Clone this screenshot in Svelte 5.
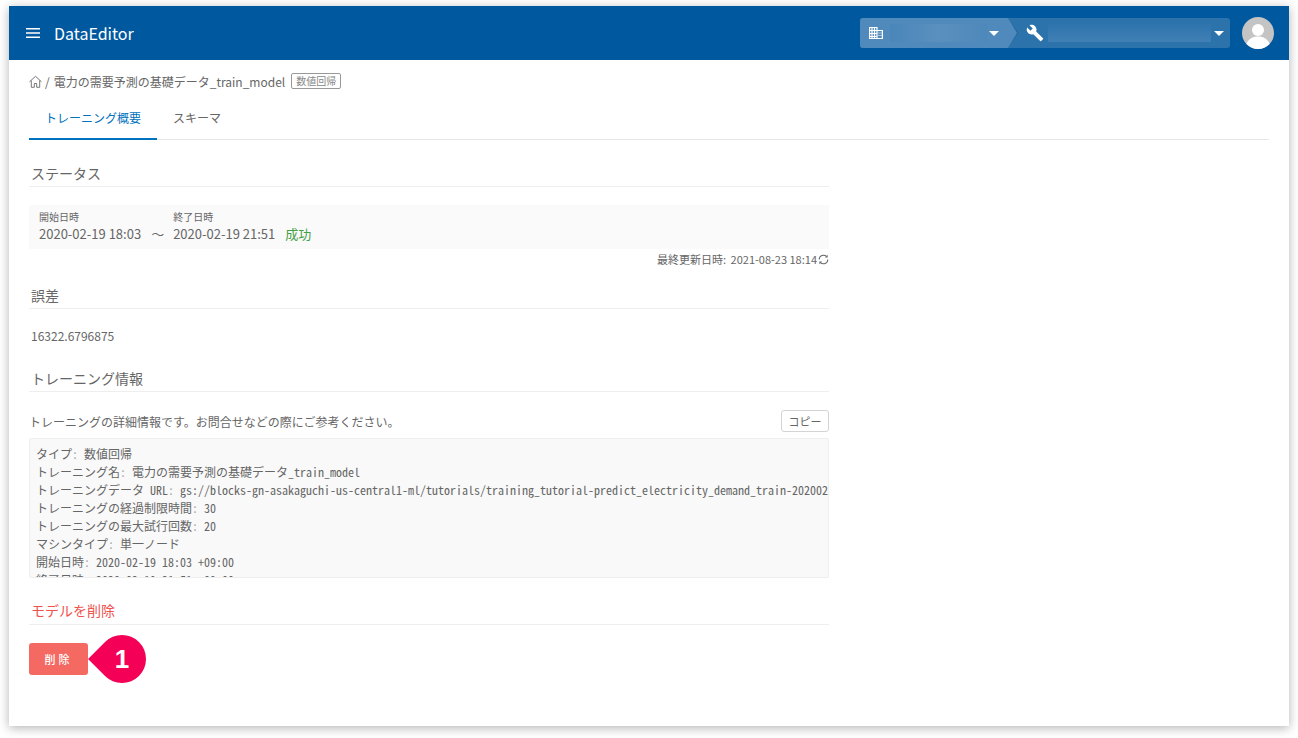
<script lang="ts">
  const codeLines = [
    ['タイプ', '数値回帰'],
    ['トレーニング名', '電力の需要予測の基礎データ_train_model'],
    ['トレーニングデータ URL', 'gs://blocks-gn-asakaguchi-us-central1-ml/tutorials/training_tutorial-predict_electricity_demand_train-20200219180300/model'],
    ['トレーニングの経過制限時間', '30'],
    ['トレーニングの最大試行回数', '20'],
    ['マシンタイプ', '単一ノード'],
    ['開始日時', '2020-02-19 18:03 +09:00'],
    ['終了日時', '2020-02-19 21:51 +09:00']
  ];
</script>

<div class="page">
  <div class="card">
    <header class="topbar">
      <div class="brand">
        <svg class="menu" width="16" height="16" viewBox="0 0 16 16" aria-hidden="true">
          <path d="M1 3h14v1.6H1zM1 7.200h14v1.600H1zM1 11.400h14V13H1z" fill="#fff" />
        </svg>
        <span class="app-name">DataEditor</span>
      </div>
      <div class="switcher">
        <div class="crumb crumb-org">
          <svg width="14" height="14" viewBox="0 0 14 14" aria-hidden="true">
            <path fill="none" stroke="#fff" stroke-width="1.200" d="M.6 1.500h7.400v11H.6zM8 4.500h5.400v8H8zM.6 4.500H8M.6 7.500H8M.6 10.500H8M3 1.500v11M5.500 1.500v11" />
            <path fill="#fff" d="M9.500 6.500h1v1h-1zM11.500 6.500h1v1h-1zM9.500 9h1v1h-1zM11.500 9h1v1h-1z" />
          </svg>
          <span class="mask"></span>
          <span class="caret"></span>
        </div>
        <div class="crumb crumb-project">
          <svg width="18" height="18" viewBox="0 0 24 24" aria-hidden="true">
            <path fill="#fff" d="M22.700 19l-9.100-9.100c.9-2.300.4-5-1.500-6.900-2-2-5-2.400-7.400-1.300L9 6 6 9 1.600 4.700C.4 7.100.9 10.100 2.900 12.100c1.900 1.900 4.600 2.400 6.900 1.500l9.100 9.100c.4.400 1 .4 1.400 0l2.300-2.300c.5-.4.500-1.100.1-1.400z" />
          </svg>
          <span class="mask mask-wide"></span>
          <span class="caret"></span>
        </div>
      </div>
      <div class="avatar">
        <svg width="32" height="32" viewBox="0 0 32 32" aria-hidden="true">
          <circle cx="16" cy="16" r="16" fill="#c4c4c4" />
          <circle cx="16" cy="13" r="6" fill="#fff" />
          <path d="M4.500 27c1.500-5 6-7.500 11.500-7.500S26 22 27.500 27A16 16 0 0 1 16 32 16 16 0 0 1 4.500 27z" fill="#fff" />
        </svg>
      </div>
    </header>

    <main class="content">
      <nav class="breadcrumb">
        <svg width="13" height="13" viewBox="0 0 13 13" aria-hidden="true">
          <path d="M.5 6.800 6.500 1.300l6 5.500M2.300 5.500v6.800h3V8.500h2.400v3.800h3V5.500" fill="none" stroke="#777" stroke-width="1" />
        </svg>
        <span class="sep">/</span>
        <span>電力の需要予測の基礎データ_train_model</span>
        <span class="tag">数値回帰</span>
      </nav>

      <div class="tabs">
        <div class="tab active">トレーニング概要</div>
        <div class="tab">スキーマ</div>
      </div>

      <div class="column">
        <section class="status">
          <h2>ステータス</h2>
          <div class="status-box">
            <div class="status-col">
              <span class="label">開始日時</span>
              <span class="value">2020-02-19 18:03</span>
            </div>
            <span class="tilde">〜</span>
            <div class="status-col">
              <span class="label">終了日時</span>
              <span class="value">2020-02-19 21:51</span>
            </div>
            <span class="success">成功</span>
          </div>
          <div class="updated">
            <span>最終更新日時: <span class="updated-at">2021-08-23 18:14</span></span>
            <svg width="11" height="11" viewBox="0 0 12 12" aria-hidden="true">
              <path d="M1.300 6a4.700 4.700 0 0 1 8-3.300M10.700 6a4.700 4.700 0 0 1-8 3.300" fill="none" stroke="#666" stroke-width="1.100" />
              <path d="M10.500 0.800v3h-3zM1.500 11.200v-3h3z" fill="#666" />
            </svg>
          </div>
        </section>

        <section class="error">
          <h2>誤差</h2>
          <p class="error-value">16322.6796875</p>
        </section>

        <section class="info">
          <h2>トレーニング情報</h2>
          <div class="info-head">
            <span>トレーニングの詳細情報です。お問合せなどの際にご参考ください。</span>
            <button type="button" class="copy">コピー</button>
          </div>
          <pre class="code">{#each codeLines as [key, val]}<span>{key}</span><span class="colon">: </span><span>{val}</span>{'\n'}{/each}</pre>
        </section>

        <section class="danger">
          <h2>モデルを削除</h2>
          <div class="danger-row">
            <button type="button" class="delete">削除</button>
            <div class="pin"><span>1</span></div>
          </div>
        </section>
      </div>
    </main>
  </div>
</div>

<style>
  :global(body) {
    margin: 0;
    background: #fff;
  }

  .page {
    height: 738px;
    box-sizing: border-box;
    padding: 6px 9px 12px;
    overflow: hidden;
  }

  .card {
    width: 1280px;
    height: 720px;
    background: #fff;
    box-shadow: 0 2px 10px rgba(0, 0, 0, 0.3);
    font-family: "Noto Sans CJK JP", "Noto Sans", sans-serif;
    color: #666;
    overflow: hidden;
  }

  .topbar {
    height: 54px;
    background: #00589f;
    display: flex;
    align-items: center;
    padding: 0 15px 0 16px;
    color: #fff;
  }

  .brand {
    display: flex;
    align-items: center;
    gap: 13px;
    flex: 1;
  }

  .app-name {
    font-size: 16px;
  }

  .switcher {
    display: flex;
    height: 30px;
    width: 370px;
    margin-right: 12px;
    border-radius: 3px;
    overflow: hidden;
    background: #2c72ab;
  }

  .crumb {
    position: relative;
    display: flex;
    align-items: center;
  }

  .crumb-org {
    width: 148px;
    padding-left: 9px;
    box-sizing: border-box;
    background: #5089bb;
    z-index: 1;
  }

  .crumb-org::before {
    content: "";
    position: absolute;
    right: -10px;
    top: 0;
    border-top: 15px solid transparent;
    border-bottom: 15px solid transparent;
    border-left: 10px solid #1c649f;
  }

  .crumb-org::after {
    content: "";
    position: absolute;
    right: -9px;
    top: 0;
    border-top: 15px solid transparent;
    border-bottom: 15px solid transparent;
    border-left: 9px solid #5089bb;
  }

  .crumb-project {
    flex: 1;
    padding-left: 18px;
  }

  .mask {
    width: 97px;
    height: 18px;
    margin-left: 7px;
    background: linear-gradient(90deg, #4a86b9, #5a90bf, #4e88ba);
  }

  .mask-wide {
    width: 163px;
    margin-left: 4px;
    background: linear-gradient(#2f74ad, #4080b5);
  }

  .caret {
    position: absolute;
    right: 7px;
    top: 13px;
    border-left: 5px solid transparent;
    border-right: 5px solid transparent;
    border-top: 5px solid #fff;
  }

  .crumb-org .caret {
    right: 9px;
  }

  .crumb-project .caret {
    right: 6px;
  }

  .avatar {
    width: 32px;
    height: 32px;
  }

  .content {
    padding: 13px 20px 0;
  }

  .breadcrumb {
    display: flex;
    align-items: center;
    font-size: 12px;
    height: 16px;
  }

  .sep {
    margin: 0 4px 0 3px;
  }

  .tag {
    margin-left: 6px;
    border: 1px solid #999;
    border-radius: 2px;
    font-size: 10px;
    line-height: 14px;
    padding: 0 4px;
    color: #888;
  }

  .tabs {
    display: flex;
    margin-top: 8px;
    border-bottom: 1px solid #e6e6e6;
    height: 42px;
  }

  .tab {
    padding: 0 16px;
    font-size: 12px;
    line-height: 42px;
    height: 42px;
    box-sizing: border-box;
  }

  .tab.active {
    color: #0071bc;
    border-bottom: 2px solid #0071bc;
    height: 43px;
  }

  .column {
    width: 800px;
  }

  h2 {
    margin: 0;
    font-size: 14px;
    font-weight: 400;
    line-height: 20px;
    height: 23px;
    padding-left: 2px;
    border-bottom: 1px solid #eee;
  }

  .status {
    padding-top: 23px;
  }

  .status-box {
    margin-top: 18px;
    height: 44px;
    background: #fafafa;
    display: flex;
    align-items: center;
    padding-left: 10px;
  }

  .status-col {
    display: flex;
    flex-direction: column;
    margin-top: -1px;
  }

  .label {
    font-size: 10px;
    line-height: 14px;
  }

  .value {
    font-size: 13px;
    line-height: 20px;
  }

  .tilde {
    font-size: 13px;
    margin: 12px 9px 0 10px;
  }

  .success {
    font-size: 13px;
    color: #43a047;
    margin: 12px 0 0 10px;
  }

  .updated {
    display: flex;
    justify-content: flex-end;
    align-items: center;
    gap: 1px;
    height: 20px;
    font-size: 11px;
  }

  .updated-at {
    margin-left: 2px;
  }

  .error {
    padding-top: 16px;
  }

  .error-value {
    margin: 19px 0 0 2px;
    font-size: 12px;
    line-height: 16px;
  }

  .info {
    padding-top: 24px;
  }

  .info-head {
    display: flex;
    justify-content: space-between;
    align-items: center;
    margin-top: 18px;
    height: 23px;
    font-size: 12px;
  }

  .copy {
    width: 48px;
    height: 22px;
    margin-bottom: 1px;
    padding: 0;
    border: 1px solid #d4d4d4;
    border-radius: 3px;
    background: #fff;
    font: inherit;
    font-size: 11px;
    color: #666;
  }

  .code {
    margin: 5px 0 0;
    height: 123px;
    padding: 6px 0 9px 6px;
    border: 1px solid #eee;
    background: #f9f9f9;
    overflow: hidden;
    font-family: "Noto Sans Mono CJK JP", "Liberation Mono", monospace;
    font-size: 12px;
    line-height: 18px;
    white-space: pre;
    border-radius: 2px;
  }

  .colon {
    color: #aaa;
  }

  .danger {
    padding-top: 22px;
  }

  .danger h2 {
    color: #ef5350;
    height: 24px;
  }

  .danger-row {
    display: flex;
    align-items: center;
    margin-top: 10px;
  }

  .delete {
    width: 59px;
    height: 32px;
    border: 0;
    border-radius: 3px;
    background: #f46a63;
    color: #fff;
    font: inherit;
    font-size: 11px;
    font-weight: 500;
    letter-spacing: 3px;
    padding: 0;
  }

  .pin {
    position: relative;
    width: 48px;
    height: 48px;
    margin-left: 10px;
    color: #fff;
    display: flex;
    align-items: center;
    justify-content: center;
    font-family: "Liberation Sans", sans-serif;
    font-weight: 700;
    font-size: 26px;
  }

  /* teardrop: sharp corner rotated round to point at the button */
  .pin::before {
    content: "";
    position: absolute;
    inset: 0;
    background: #f50057;
    border-radius: 50% 50% 50% 0;
    transform: rotate(45deg);
  }

  .pin span {
    position: relative;
  }
</style>
